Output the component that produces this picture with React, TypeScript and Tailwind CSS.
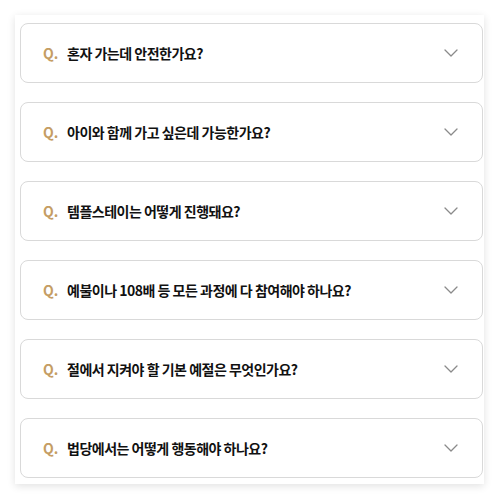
import React from 'react';

const faqs = [
  '혼자 가는데 안전한가요?',
  '아이와 함께 가고 싶은데 가능한가요?',
  '템플스테이는 어떻게 진행돼요?',
  '예불이나 108배 등 모든 과정에 다 참여해야 하나요?',
  '절에서 지켜야 할 기본 예절은 무엇인가요?',
  '법당에서는 어떻게 행동해야 하나요?',
];

function Chevron() {
  return (
    <svg width="14" height="8" viewBox="0 0 14 8" fill="none" className="shrink-0">
      <path d="M1 1l6 6 6-6" stroke="#8a8a8a" strokeWidth="1.3" strokeLinecap="round" strokeLinejoin="round" />
    </svg>
  );
}

export default function App() {
  return (
    <div className="min-h-screen bg-white pt-[15px] pl-[15px]" style={{ fontFamily: '"Noto Sans CJK KR", "Noto Sans", sans-serif' }}>
      <div className="w-[469px] bg-white pl-[5px] pr-px pt-2 pb-[6px] shadow-[0_2px_8px_rgba(0,0,0,0.12)]">
        <div className="flex flex-col gap-[19px]">
          {faqs.map((q, i) => (
            <div
              key={i}
              className="flex h-[60px] items-center rounded-[8px] border border-[#d9d9d9] bg-white pl-[22px] pr-[24px]"
            >
              <span className="w-[24px] shrink-0 text-[14px] font-bold text-[#c59d63]">Q.</span>
              <span className="flex-1 text-[14px] font-bold tracking-[-0.5px] text-[#111]">{q}</span>
              <Chevron />
            </div>
          ))}
        </div>
      </div>
    </div>
  );
}
